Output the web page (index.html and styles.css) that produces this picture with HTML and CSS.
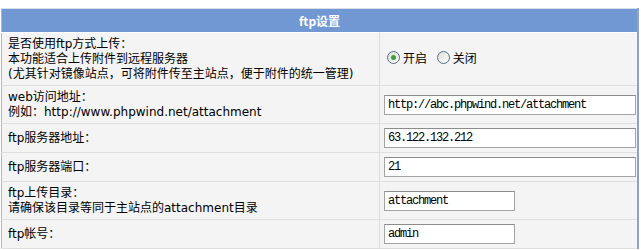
FILE: index.html
```html
<!DOCTYPE html>
<html lang="zh-CN">
<head>
    <meta charset="UTF-8">
    <meta name="viewport" content="width=device-width, initial-scale=1.0">
    <title>ftp设置</title>
    <link rel="stylesheet" href="styles.css">
</head>
<body>

<div class="wrap">
<table class="settings">
    <tr>
        <th colspan="2">ftp设置</th>
    </tr>
    <tr class="row-3">
        <td class="label">是否使用ftp方式上传：<br>本功能适合上传附件到远程服务器<br>(尤其针对镜像站点，可将附件传至主站点，便于附件的统一管理)</td>
        <td class="field">
            <label class="opt"><span class="radio checked"></span>开启</label>
            <label class="opt"><span class="radio"></span>关闭</label>
        </td>
    </tr>
    <tr class="row-2">
        <td class="label">web访问地址：<br>例如：http://www.phpwind.net/attachment</td>
        <td class="field"><input type="text" class="text wide" value="http://abc.phpwind.net/attachment"></td>
    </tr>
    <tr class="row-1">
        <td class="label">ftp服务器地址：</td>
        <td class="field"><input type="text" class="text wide" value="63.122.132.212"></td>
    </tr>
    <tr class="row-1">
        <td class="label">ftp服务器端口：</td>
        <td class="field"><input type="text" class="text wide" value="21"></td>
    </tr>
    <tr class="row-2">
        <td class="label">ftp上传目录：<br>请确保该目录等同于主站点的attachment目录</td>
        <td class="field"><input type="text" class="text short" value="attachment"></td>
    </tr>
    <tr class="row-1">
        <td class="label">ftp帐号：</td>
        <td class="field"><input type="text" class="text short" value="admin"></td>
    </tr>
</table>
</div>

</body>
</html>
```

FILE: styles.css
```css
body {
    margin: 0;
    background: #fff;
    font-family: "DejaVu Sans", "Noto Sans CJK SC", sans-serif;
    font-size: 12px;
    color: #000;
}
.wrap {
    padding: 8px 0 0 1px;
}
.settings {
    width: 638px;
    border-collapse: collapse;
    border-left: 1px solid #a9b8ce;
    border-right: 2px solid #8fa3c0;
    border-top: 1px solid #d8dfe9;
}
.settings th {
    height: 23px;
    padding: 0;
    background: #7198d2;
    color: #fff;
    font-family: "Noto Sans CJK SC", sans-serif;
    font-weight: bold;
    font-size: 12px;
    text-align: center;
}
.settings td {
    background: #f4f4f4;
    border-top: 1px solid #fff;
    border-bottom: 1px solid #dfdfdf;
    vertical-align: middle;
    line-height: 15px;
}
.label {
    width: 365px;
    padding: 0 6px;
    border-right: 1px solid #dcdcdc;
}
.field {
    padding: 0 0 0 4px;
}
.row-3 td { height: 52px; }
.row-2 td { height: 37px; }
.row-1 td { height: 28px; }

.text {
    box-sizing: border-box;
    height: 20px;
    margin: 0;
    padding: 0 3px;
    border: 1px solid #a3a3a3;
    border-top-color: #8c8c8c;
    background: #fff;
    font-family: "Liberation Mono", monospace;
    font-size: 12px;
    letter-spacing: -1.2px;
    color: #000;
}
.wide { width: 252px; }
.short { width: 131px; }

.opt {
    display: inline-flex;
    align-items: center;
    margin: 0 6px 0 3px;
    font-family: "Noto Sans CJK SC", sans-serif;
}
.opt + .opt {
    margin-left: 0;
}
.radio {
    position: relative;
    width: 11px;
    height: 11px;
    margin-right: 3px;
    border: 1px solid #5a6f86;
    border-radius: 50%;
    background: linear-gradient(135deg, #dcdcd6, #fff);
}
.radio.checked::after {
    content: "";
    position: absolute;
    left: 3px;
    top: 3px;
    width: 5px;
    height: 5px;
    border-radius: 50%;
    background: #3f9f3f;
}
```
